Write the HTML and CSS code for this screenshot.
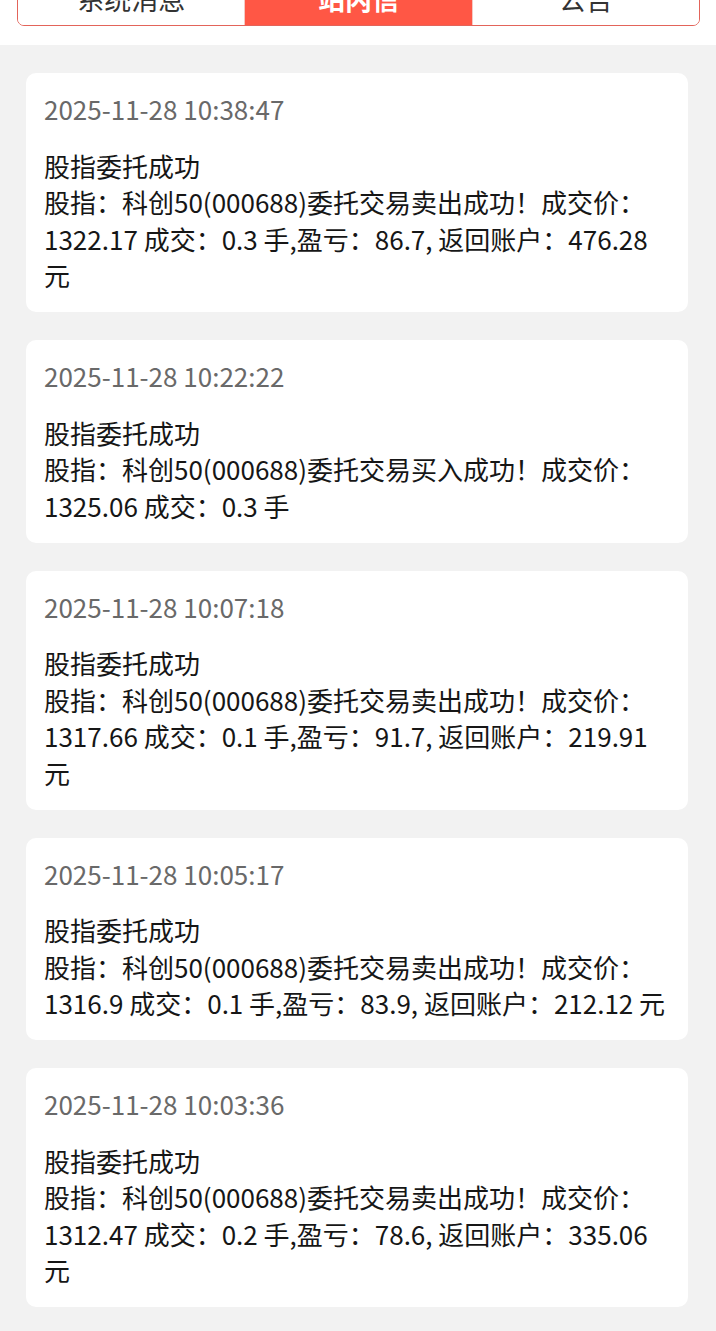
FILE: index.html
```html
<!DOCTYPE html>
<html lang="zh-CN">
<head>
    <meta charset="UTF-8">
    <meta name="viewport" content="width=device-width, initial-scale=1.0">
    <title>站内信</title>
    <link rel="stylesheet" href="styles.css">
</head>
<body>
    <div class="header">
        <div class="tabs">
            <div class="tab">系统消息</div>
            <div class="tab active">站内信</div>
            <div class="tab">公告</div>
        </div>
    </div>

    <div class="list">
        <div class="card">
            <div class="time">2025-11-28 10:38:47</div>
            <div class="title">股指委托成功</div>
            <div class="content">股指：科创50(000688)委托交易卖出成功！成交价：1322.17 成交：0.3 手,盈亏：86.7, 返回账户：476.28 元</div>
        </div>
        <div class="card">
            <div class="time">2025-11-28 10:22:22</div>
            <div class="title">股指委托成功</div>
            <div class="content">股指：科创50(000688)委托交易买入成功！成交价：1325.06 成交：0.3 手</div>
        </div>
        <div class="card">
            <div class="time">2025-11-28 10:07:18</div>
            <div class="title">股指委托成功</div>
            <div class="content">股指：科创50(000688)委托交易卖出成功！成交价：1317.66 成交：0.1 手,盈亏：91.7, 返回账户：219.91 元</div>
        </div>
        <div class="card">
            <div class="time">2025-11-28 10:05:17</div>
            <div class="title">股指委托成功</div>
            <div class="content">股指：科创50(000688)委托交易卖出成功！成交价：1316.9 成交：0.1 手,盈亏：83.9, 返回账户：212.12 元</div>
        </div>
        <div class="card">
            <div class="time">2025-11-28 10:03:36</div>
            <div class="title">股指委托成功</div>
            <div class="content">股指：科创50(000688)委托交易卖出成功！成交价：1312.47 成交：0.2 手,盈亏：78.6, 返回账户：335.06 元</div>
        </div>
    </div>
</body>
</html>
```

FILE: styles.css
```css
body {
    margin: 0;
    font-family: "Noto Sans CJK SC", "Noto Sans", sans-serif;
    background-color: #f2f2f2;
    color: #161616;
}

/* page is scrolled a little, so the tab bar is cut at the top */
.header {
    background-color: #ffffff;
    padding: 0 16px 19px 17px;
    margin-top: -30px;
}

.tabs {
    display: flex;
    height: 54px;
    border: 1px solid #e3645a;
    border-radius: 0 0 7px 7px;
    overflow: hidden;
}

.tab {
    flex: 1;
    display: flex;
    justify-content: center;
    align-items: center;
    font-size: 27px;
    color: #333333;
    background-color: #ffffff;
}

.tab + .tab {
    border-left: 1px solid #f4c9c4;
}

.tab.active {
    background-color: #ff5745;
    color: #ffffff;
    font-weight: bold;
}

.list {
    display: flex;
    flex-direction: column;
    gap: 28px;
    padding: 28px 28px 25px 26px;
}

.card {
    background-color: #ffffff;
    border-radius: 10px;
    padding: 18px 18px 18.5px;
    font-size: 26px;
    line-height: 36.5px;
}

.time {
    color: #696969;
    margin-bottom: 20px;
}
```
